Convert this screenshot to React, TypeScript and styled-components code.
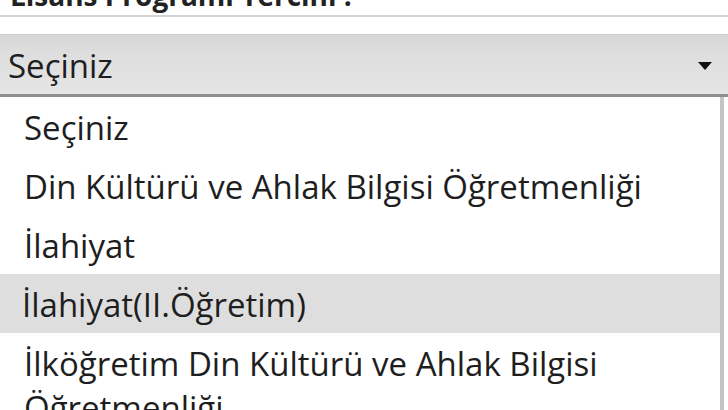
import React from "react";
import styled, { createGlobalStyle } from "styled-components";

const GlobalStyle = createGlobalStyle`
  html, body {
    margin: 0;
    padding: 0;
    background: #ffffff;
    overflow: hidden;
  }
  body {
    font-family: "Open Sans", "Noto Sans", "DejaVu Sans", sans-serif;
    color: #1e1e1e;
  }
`;

const options = [
  "Seçiniz",
  "Din Kültürü ve Ahlak Bilgisi Öğretmenliği",
  "İlahiyat",
  "İlahiyat(II.Öğretim)",
  "İlköğretim Din Kültürü ve Ahlak Bilgisi Öğretmenliği",
];

const Page = styled.div`
  width: 728px;
  height: 410px;
  overflow: hidden;
`;

const FieldLabel = styled.div`
  height: 15px;
  border-bottom: 2px solid #d2d2d2;
  overflow: hidden;
  padding-left: 10px;
  font-size: 28px;
  font-weight: 700;
  line-height: 20px;
  color: #222;
  & > span {
    display: block;
    margin-top: -15px;
  }
`;

const Select = styled.div`
  margin-top: 17px;
  height: 59px;
  border-top: 1px solid #cfcfcf;
  border-bottom: 3px solid #8f8f8f;
  background: linear-gradient(#d6d6d6 0%, #dedede 30%, #e2e2e2 70%, #e6e6e6 100%);
  display: flex;
  align-items: center;
  justify-content: space-between;
  padding: 0 16px 0 8px;
  font-size: 33px;
  line-height: 40px;
  & > span:first-child {
    margin-top: 3px;
  }
`;

const Arrow = styled.span`
  width: 0;
  height: 0;
  border-left: 7px solid transparent;
  border-right: 7px solid transparent;
  border-top: 8px solid #111;
  margin-top: 2px;
`;

const List = styled.div`
  border-right: 4px solid #c4c4c4;
  width: 700px;
  padding-right: 20px;
`;

const Item = styled.div<{ $active?: boolean }>`
  min-height: 59px;
  box-sizing: border-box;
  padding: 9px 0 6px ${(p) => (p.$active ? "22px" : "24px")};
  margin-right: -20px;
  font-size: 33px;
  line-height: 44px;
  background: ${(p) => (p.$active ? "#dedede" : "transparent")};
`;

const App = () => {
  return (
    <Page>
      <GlobalStyle />
      <FieldLabel>
        <span>Lisans Programı Tercihi :</span>
      </FieldLabel>
      <Select>
        <span>Seçiniz</span>
        <Arrow />
      </Select>
      <List>
        {options.map((o) => (
          <Item key={o} $active={o === "İlahiyat(II.Öğretim)"}>
            {o}
          </Item>
        ))}
      </List>
    </Page>
  );
};

export default App;
